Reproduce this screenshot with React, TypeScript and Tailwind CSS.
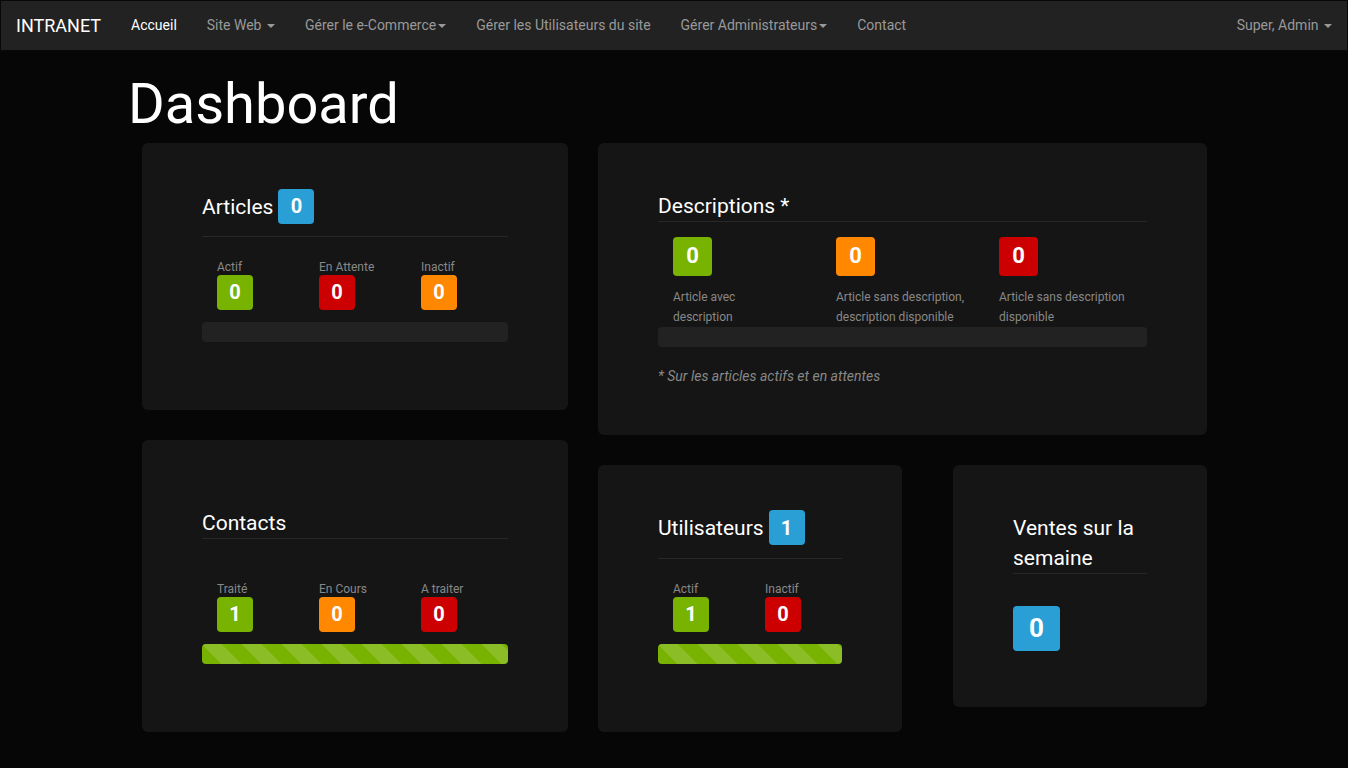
import React from 'react'

const font = { fontFamily: 'Roboto, "Noto Sans", sans-serif' }

function Caret() {
  return <span className="ml-[2px] inline-block h-0 w-0 border-x-[4px] border-t-[4px] border-x-transparent border-t-current align-middle" />
}

const colors: Record<string, string> = {
  green: 'bg-[#77b300]',
  red: 'bg-[#cc0000]',
  orange: 'bg-[#ff8800]',
  blue: 'bg-[#2a9fd6]',
}

function Badge({ value, color, size = 'sm' }: { value: number; color: string; size?: 'sm' | 'md' | 'lg' }) {
  const dims =
    size === 'lg'
      ? 'w-[47px] h-[45px] text-[26px]'
      : size === 'md'
      ? 'w-[39px] h-[39px] text-[22px]'
      : 'w-[36px] h-[35px] text-[20px]'
  return (
    <span className={`${dims} ${colors[color]} inline-flex items-center justify-center rounded-[4px] font-bold leading-none text-white`}>
      {value}
    </span>
  )
}

function Stat({ label, value, color }: { label: string; value: number; color: string }) {
  return (
    <div className="pl-[15px]">
      <div className="h-[17px] text-[12px] leading-[19px] text-[#888]">{label}</div>
      <Badge value={value} color={color} />
    </div>
  )
}

function Progress({ striped }: { striped?: boolean }) {
  return (
    <div className="h-[20px] overflow-hidden rounded-[4px] bg-[#222]">
      {striped && (
        <div className="h-full w-full bg-[#77b300] bg-[linear-gradient(45deg,rgba(255,255,255,.15)_25%,transparent_25%,transparent_50%,rgba(255,255,255,.15)_50%,rgba(255,255,255,.15)_75%,transparent_75%,transparent)] bg-[length:40px_40px]" />
      )}
    </div>
  )
}

export default function App() {
  const nav = [
    { t: 'Site Web', caret: 'space' },
    { t: 'Gérer le e-Commerce', caret: 'tight' },
    { t: 'Gérer les Utilisateurs du site' },
    { t: 'Gérer Administrateurs', caret: 'tight' },
    { t: 'Contact' },
  ]

  return (
    <div className="min-h-[768px] bg-[#060606] text-white" style={font}>
      {/* Navbar */}
      <div className="flex h-[51px] items-center border border-[#080808] bg-[#222]">
        <div className="pl-[15px] pr-[15px] text-[18px] text-white">INTRANET</div>
        <div className="flex items-center text-[14px]">
          <span className="px-[15px] text-white">Accueil</span>
          {nav.map(n => (
            <span key={n.t} className="whitespace-pre px-[15px] text-[#999]">
              {n.t}
              {n.caret === 'space' && ' '}
              {n.caret && <Caret />}
            </span>
          ))}
        </div>
        <div className="ml-auto whitespace-pre px-[15px] text-[14px] text-[#999]">
          Super, Admin <Caret />
        </div>
      </div>

      <div className="pl-[128px]">
        <h1 className="mt-[23px] mb-[7px] text-[56px] leading-[1.1] font-normal text-white">Dashboard</h1>

        <div className="ml-[14px] flex items-start gap-[30px]">
          {/* Left column */}
          <div className="flex w-[426px] flex-col gap-[30px]">
            {/* Articles */}
            <div className="h-[267px] rounded-[6px] bg-[#151515] px-[60px] pt-[46px]">
              <div className="flex h-[35px] items-center gap-[5px] text-[21px]">
                <span className="pt-[3px]">Articles</span> <Badge value={0} color="blue" />
              </div>
              <div className="mt-[12px] border-t border-[#282828]" />
              <div className="mt-[21px] grid grid-cols-3">
                <Stat label="Actif" value={0} color="green" />
                <Stat label="En Attente" value={0} color="red" />
                <Stat label="Inactif" value={0} color="orange" />
              </div>
              <div className="mt-[12px]">
                <Progress />
              </div>
            </div>

            {/* Contacts */}
            <div className="h-[292px] rounded-[6px] bg-[#151515] px-[60px] pt-[68px]">
              <div className="h-[31px] border-b border-[#282828] text-[21px] leading-[30px]">Contacts</div>
              <div className="mt-[41px] grid grid-cols-3">
                <Stat label="Traité" value={1} color="green" />
                <Stat label="En Cours" value={0} color="orange" />
                <Stat label="A traiter" value={0} color="red" />
              </div>
              <div className="mt-[12px]">
                <Progress striped />
              </div>
            </div>
          </div>

          {/* Right column */}
          <div className="flex w-[609px] flex-col gap-[30px]">
            {/* Descriptions */}
            <div className="h-[292px] rounded-[6px] bg-[#151515] px-[60px] pt-[48px]">
              <div className="h-[31px] border-b border-[#282828] text-[21px] leading-[30px]">Descriptions *</div>
              <div className="mt-[15px] grid grid-cols-3">
                {[
                  { v: 0, c: 'green', l: ['Article avec', 'description'] },
                  { v: 0, c: 'orange', l: ['Article sans description,', 'description disponible'] },
                  { v: 0, c: 'red', l: ['Article sans description', 'disponible'] },
                ].map((d, i) => (
                  <div key={i} className="pl-[15px]">
                    <Badge value={d.v} color={d.c} size="md" />
                    <div className="mt-[11px] text-[12px] leading-[20px] text-[#888]">
                      {d.l[0]}
                      <br />
                      {d.l[1]}
                    </div>
                  </div>
                ))}
              </div>
              <Progress />
              <p className="mt-[19px] text-[14px] leading-[20px] italic text-[#888]">* Sur les articles actifs et en attentes</p>
            </div>

            <div className="flex items-start gap-[51px]">
              {/* Utilisateurs */}
              <div className="h-[267px] w-[304px] rounded-[6px] bg-[#151515] px-[60px] pt-[46px]">
                <div className="flex h-[34px] items-center gap-[5px] text-[21px]">
                  <span className="pt-[2px]">Utilisateurs</span> <Badge value={1} color="blue" />
                </div>
                <div className="mt-[13px] border-t border-[#282828]" />
                <div className="mt-[21px] grid grid-cols-2">
                  <Stat label="Actif" value={1} color="green" />
                  <Stat label="Inactif" value={0} color="red" />
                </div>
                <div className="mt-[12px]">
                  <Progress striped />
                </div>
              </div>

              {/* Ventes */}
              <div className="h-[242px] w-[254px] rounded-[6px] bg-[#151515] px-[60px] pt-[48px]">
                <div className="border-b border-[#282828] text-[21px] leading-[30px]">Ventes sur la semaine</div>
                <div className="mt-[32px]">
                  <Badge value={0} color="blue" size="lg" />
                </div>
              </div>
            </div>
          </div>
        </div>
      </div>
    </div>
  )
}
